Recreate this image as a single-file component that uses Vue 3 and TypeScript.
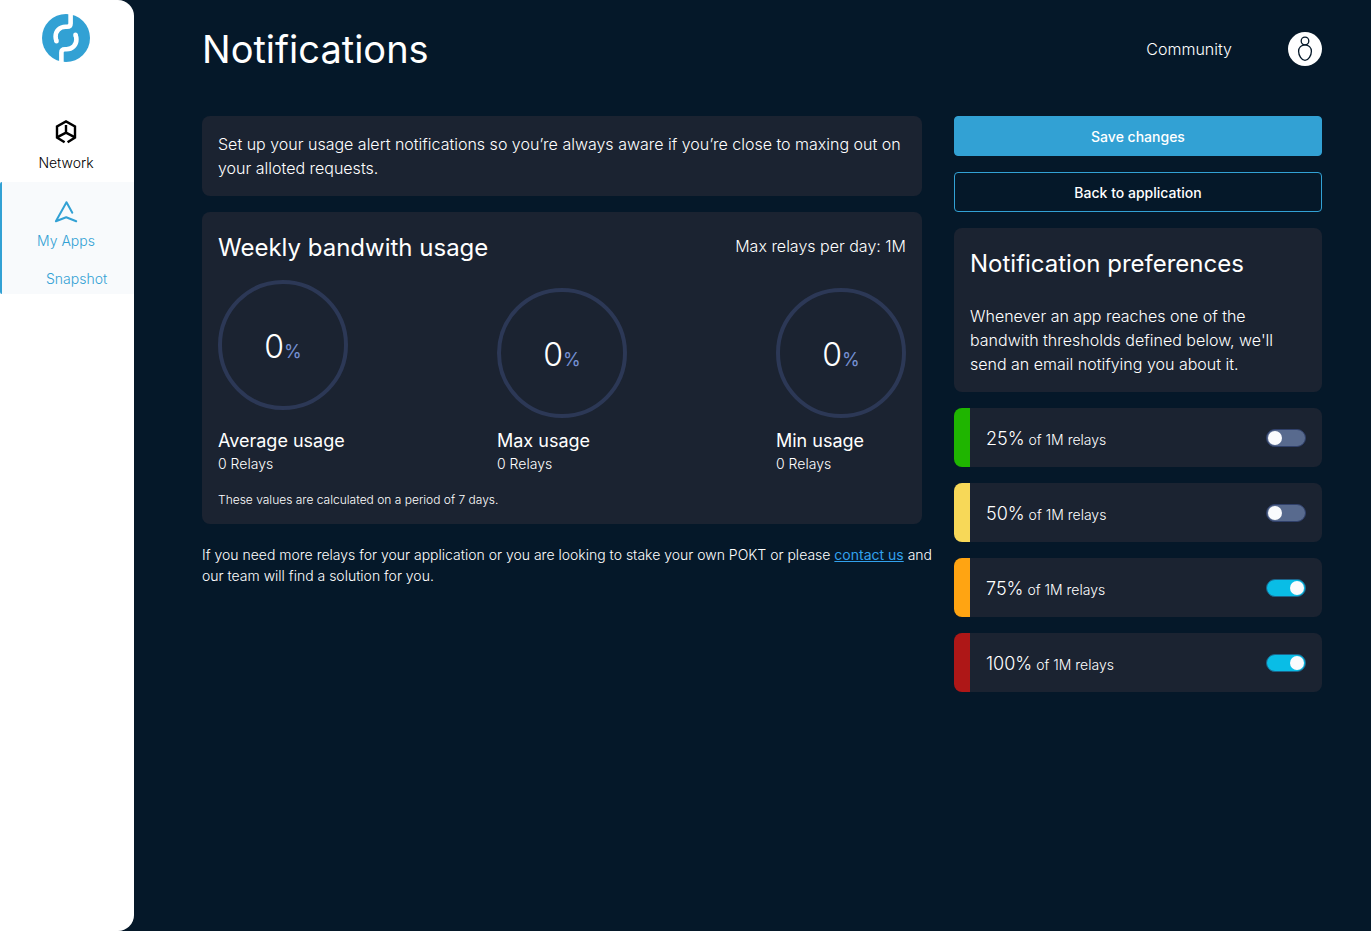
<script setup lang="ts">
import { ref } from 'vue'

interface Gauge {
  title: string
  percent: number
  relays: number
}

interface Threshold {
  id: string
  percent: number
  tone: string
  enabled: boolean
}

const gauges: Gauge[] = [
  { title: 'Average usage', percent: 0, relays: 0 },
  { title: 'Max usage', percent: 0, relays: 0 },
  { title: 'Min usage', percent: 0, relays: 0 },
]

const thresholds = ref<Threshold[]>([
  { id: 'quarter', percent: 25, tone: 'green', enabled: false },
  { id: 'half', percent: 50, tone: 'yellow', enabled: false },
  { id: 'threeQuarters', percent: 75, tone: 'orange', enabled: true },
  { id: 'full', percent: 100, tone: 'red', enabled: true },
])
</script>

<template>
  <div class="page">
    <aside class="sidebar">
      <a class="logo" href="#" aria-label="Home">
        <svg width="48" height="48" viewBox="0 0 48 48" fill="none">
          <circle cx="24" cy="24" r="24" fill="#32a1d4" />
          <g stroke="#fff" stroke-width="4.6">
            <path d="M28.6 -1V9.5Q28.6 12.7 25 12.7H23.5C17.5 12.7 13.6 17 13.6 22.5Q13.6 25 14.5 27.2" />
            <path d="M19.4 49V38.5Q19.4 35.3 23 35.3H24.5C30.5 35.3 34.4 31 34.4 25.5Q34.4 23 33.5 20.8" />
            <path d="M14.5 27V27.2M33.5 21V20.8" stroke-linecap="round" />
          </g>
        </svg>
      </a>
      <nav class="nav">
        <a class="nav-item" href="#">
          <svg width="24" height="24" viewBox="0 0 24 24" fill="none" stroke="#000" stroke-width="2.4">
            <path d="M10.6 22.3L3 17.6V6.5L12 1.4L21 6.5V17.6L13.6 22.3" />
            <path d="M12 5V12.6M3 17.4L12 12.6L21 17.4" />
          </svg>
          <span>Network</span>
        </a>
        <div class="nav-group">
          <a class="nav-item" href="#">
            <svg width="24" height="24" viewBox="0 0 24 24" fill="none" stroke="#32a1d4" stroke-width="2" stroke-linecap="round" stroke-linejoin="round">
              <path d="M18.3 12.7L12.5 2.2L1.9 21.3L12.2 17.3L22.2 21.3" />
            </svg>
            <span>My Apps</span>
          </a>
          <a class="nav-sub" href="#">Snapshot</a>
        </div>
      </nav>
    </aside>

    <div class="body">
      <header class="header">
        <h1>Notifications</h1>
        <div class="header-links">
          <a class="community" href="#">Community</a>
          <button class="avatar" type="button" aria-label="Account">
            <svg width="34" height="34" viewBox="0 0 34 34" fill="none" stroke="#051829" stroke-width="1.3">
              <circle cx="17" cy="9" r="3.8" />
              <path d="M17 12.8C13.4 12.8 10.6 15.6 10.6 19.2C10.6 23.4 13.6 28.4 17 28.4S23.4 23.4 23.4 19.2C23.4 15.6 20.6 12.8 17 12.8Z" />
            </svg>
          </button>
        </div>
      </header>

      <div class="columns">
        <main class="main">
          <section class="card intro">
            <p>Set up your usage alert notifications so you’re always aware if you’re close to maxing out on your alloted requests.</p>
          </section>

          <section class="card usage">
            <div class="usage-head">
              <h2>Weekly bandwith usage</h2>
              <p>Max relays per day: 1M</p>
            </div>
            <div class="gauges">
              <div v-for="gauge in gauges" :key="gauge.title" class="gauge">
                <div class="ring">
                  <span class="value">{{ gauge.percent }}</span><span class="unit">%</span>
                </div>
                <h3>{{ gauge.title }}</h3>
                <p>{{ gauge.relays }} Relays</p>
              </div>
            </div>
            <p class="note">These values are calculated on a period of 7 days.</p>
          </section>

          <p class="contact">
            If you need more relays for your application or you are looking to stake your own POKT or please
            <a href="#">contact us</a> and our team will find a solution for you.
          </p>
        </main>

        <aside class="side">
          <button class="btn primary" type="button">Save changes</button>
          <button class="btn" type="button">Back to application</button>
          <section class="card prefs">
            <h2>Notification preferences</h2>
            <p>Whenever an app reaches one of the bandwith thresholds defined below, we'll send an email notifying you about it.</p>
          </section>
          <div v-for="item in thresholds" :key="item.id" class="threshold" :class="item.tone">
            <label :for="item.id"><span class="percent">{{ item.percent }}%</span> of 1M relays</label>
            <input :id="item.id" v-model="item.enabled" class="switch" type="checkbox" />
          </div>
        </aside>
      </div>
    </div>
  </div>
</template>

<style>
body {
  background: #051829;
}
</style>

<style scoped>
* {
  box-sizing: border-box;
}

h1,
h2,
h3,
p {
  margin: 0;
  font-weight: 400;
}

a {
  text-decoration: none;
}

.page {
  display: flex;
  min-height: 100vh;
  background: #051829;
  color: #fff;
  font-family: Inter, "Liberation Sans", sans-serif;
  font-size: 16px;
  font-weight: 300;
  line-height: 24px;
}

.page p {
  font-weight: 300;
}

.sidebar {
  flex: none;
  width: 134px;
  padding-top: 14px;
  background: #fff;
  border-radius: 0 16px 16px 0;
}

.logo {
  display: block;
  width: 48px;
  height: 48px;
  margin-left: 42px;
}

.nav {
  display: flex;
  flex-direction: column;
  margin-top: 42px;
  font-size: 14px;
  line-height: 20px;
}

.nav-item {
  display: flex;
  flex-direction: column;
  align-items: center;
  gap: 9px;
  height: 78px;
  padding: 16px 2px 0 0;
  color: #000;
}

.nav-group {
  height: 112px;
  background: #f8fafc;
  border-left: 2px solid #32a1d4;
  border-radius: 2px 0 0 2px;
}

.nav-group .nav-item {
  padding: 18px 4px 0 0;
  gap: 7px;
  color: #32a1d4;
}

.nav-sub {
  display: block;
  margin-top: 9px;
  padding-left: 44px;
  color: #32a1d4;
}

.body {
  flex: 1;
  min-width: 0;
  padding: 0 49px 0 68px;
}

.header {
  display: flex;
  align-items: center;
  justify-content: space-between;
  height: 98px;
}

.header h1 {
  font-size: 38px;
  line-height: 48px;
}

.header-links {
  display: flex;
  align-items: center;
  gap: 56px;
}

.community {
  color: #fff;
}

.avatar {
  width: 34px;
  height: 34px;
  padding: 0;
  border: 0;
  border-radius: 50%;
  background: #fff;
}

.columns {
  display: grid;
  grid-template-columns: 1fr 368px;
  gap: 32px;
  padding-top: 18px;
}

.side {
  display: flex;
  flex-direction: column;
  gap: 16px;
}

.card {
  padding: 16px;
  border-radius: 8px;
  background: #1b2331;
}

.card h2 {
  padding-top: 4px;
  font-size: 24px;
  line-height: 32px;
}

.usage {
  margin-top: 16px;
}

.usage-head {
  display: flex;
  justify-content: space-between;
}

.usage-head p {
  padding-top: 6px;
}

.gauges {
  display: flex;
  justify-content: space-between;
  margin-top: 16px;
}

.gauge {
  width: 130px;
}

.ring {
  display: flex;
  align-items: baseline;
  justify-content: center;
  height: 130px;
  margin: 8px 0;
  padding-top: 43px;
  border: 4px solid #2c3856;
  border-radius: 50%;
}

.gauge:first-child .ring {
  margin: 0 0 16px;
}

.value {
  font-size: 32px;
  line-height: 40px;
}

.unit {
  color: #7690d3;
  font-size: 18px;
  font-weight: 400;
}

.gauge h3 {
  padding-top: 2px;
  font-size: 18px;
  line-height: 26px;
}

.gauge p {
  font-size: 14px;
  line-height: 20px;
}

.usage .note {
  padding-top: 2px;
  margin-top: 16px;
  font-size: 12px;
  line-height: 16px;
}

.contact {
  margin: 20px -16px 0 0;
  font-size: 14px;
  line-height: 21px;
}

.contact a {
  color: #32a1ed;
  font-weight: 400;
  text-decoration: underline;
}

.btn {
  height: 40px;
  padding: 0;
  border: 1px solid #32a1d4;
  border-radius: 4px;
  background: transparent;
  color: #fff;
  font-family: inherit;
  font-size: 14px;
  font-weight: 500;
}

.btn.primary {
  background: #32a1d4;
}

.prefs p {
  margin-top: 24px;
}

.threshold {
  display: flex;
  align-items: center;
  justify-content: space-between;
  height: 59px;
  padding: 0 16px;
  border-left: 16px solid;
  border-radius: 8px;
  background: #1b2331;
  font-size: 14px;
}

.threshold label {
  padding-top: 4px;
}

.percent {
  font-size: 18px;
}

.green {
  border-color: #1fb500;
}

.yellow {
  border-color: #f7d858;
}

.orange {
  border-color: #ffa412;
}

.red {
  border-color: #ae1717;
}

.switch {
  appearance: none;
  width: 40px;
  height: 18px;
  margin: 0;
  padding: 1px;
  border: 1px solid #30406a;
  border-radius: 9px;
  background: #586a8e;
}

.switch::before {
  content: "";
  display: block;
  width: 14px;
  height: 14px;
  border-radius: 50%;
  background: #fafbfd;
}

.switch:checked {
  border-color: #1c6389;
  background: #09bde6;
}

.switch:checked::before {
  margin-left: 22px;
}
</style>
